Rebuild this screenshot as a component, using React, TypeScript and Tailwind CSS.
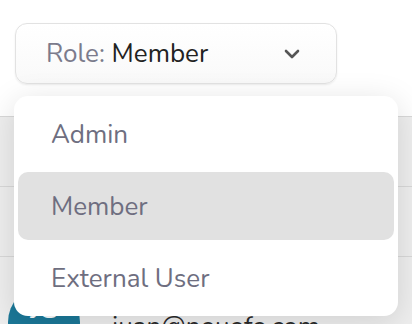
import React from "react";

export default function App() {
  return (
    <div className="relative w-[412px] h-[324px] overflow-hidden bg-white font-['Nunito','Lato','Noto_Sans',sans-serif]">
      <div className="pt-[23px] pl-[15px]">
        <button className="flex items-center justify-between w-[322px] h-[61px] pl-[30px] pr-[36px] rounded-[12px] border border-[#e2e2e2] bg-gradient-to-b from-white to-[#f9f9f9] shadow-[0_1px_2px_rgba(0,0,0,0.08)]">
          <span className="text-[26px] leading-none">
            <span className="text-[#7b7b8c]">Role: </span>
            <span className="text-[#222]">Member</span>
          </span>
          <svg width="16" height="10" viewBox="0 0 16 10" fill="none">
            <path d="M2 2l6 6 6-6" stroke="#555" strokeWidth="2.6" strokeLinecap="round" strokeLinejoin="round" />
          </svg>
        </button>
      </div>
      <div className="mt-[32px] bg-[#eeeeee]">
        <div className="h-[70px] border-t border-[#d8d8d8]" />
        <div className="h-[70px] border-t border-[#d8d8d8]" />
        <div className="h-[70px] border-t border-[#d8d8d8] flex items-start pt-[29px]">
          <div className="ml-[8px] w-[72px] h-[72px] shrink-0 rounded-full bg-[#1b7898] flex items-start justify-center pt-[11px] text-white text-[26px] leading-none">JG</div>
          <div className="ml-[32px] mt-[28px] text-[26px] leading-none text-[#2a2a2a]">juan@nouofo.com</div>
        </div>
      </div>
      <div className="absolute left-[14px] top-[96px] w-[384px] p-[4px] flex flex-col gap-[4px] rounded-[14px] bg-white shadow-[0_6px_32px_rgba(0,0,0,0.13)]">
        <div className="h-[68px] flex items-center pl-[33px] text-[26px] text-[#6e6e80] rounded-[10px]">Admin</div>
        <div className="h-[68px] flex items-center pl-[33px] text-[26px] text-[#6e6e80] rounded-[10px] bg-[#e1e1e1]">Member</div>
        <div className="h-[68px] flex items-center pl-[33px] text-[26px] text-[#6e6e80] rounded-[10px]">External User</div>
      </div>
    </div>
  );
}
